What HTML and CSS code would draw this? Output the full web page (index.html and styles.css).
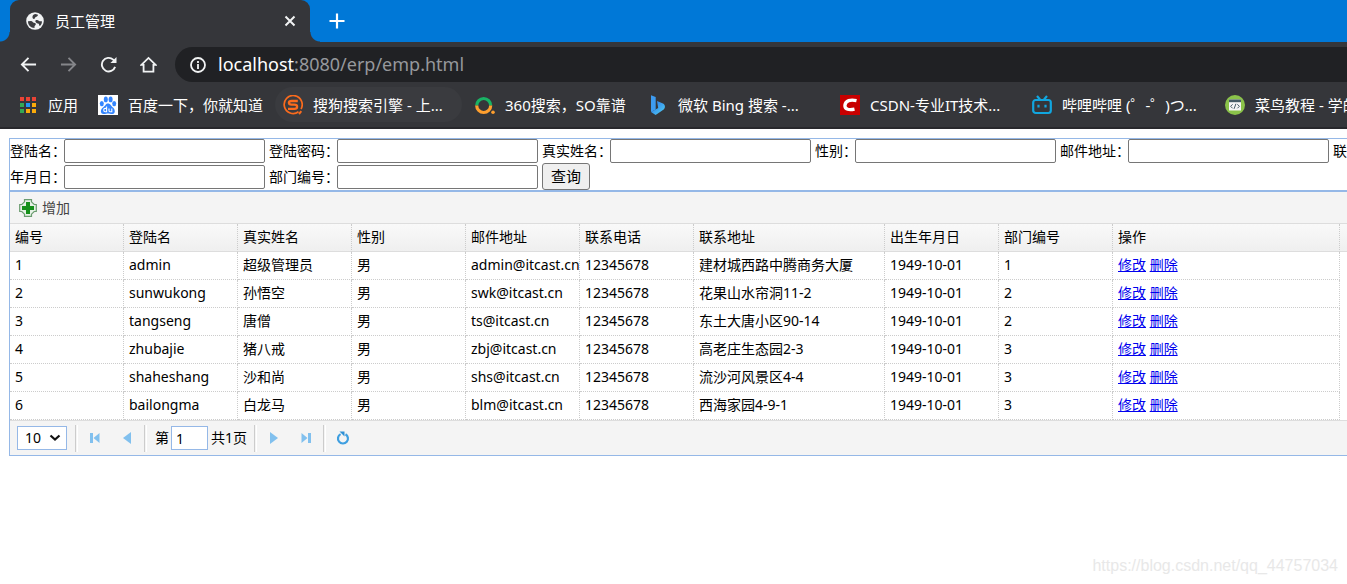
FILE: index.html
```
<!DOCTYPE html>
<html lang="zh-CN">
<head>
<meta charset="utf-8">
<title>员工管理</title>
<link rel="stylesheet" href="styles.css">
</head>
<body>
<header class="browser">
  <div class="tabs">
    <div class="tab">
      <svg class="tab-icon" viewBox="0 0 18 18" aria-hidden="true"><circle cx="9" cy="9" r="8.8" fill="#f1f3f4"/><path d="M2 9.200 5 9c1.500 0 1.600 1.700 3 1.800 1.200.1 2 .4 1.800 1.700-.2 1-1.300 1-1.300 2.100V16C4.600 15.800 2 13 2 9.200ZM6.500 4.500c.2-1.400 1.500-2.300 3-2.500l2.500.7c-.2 1.500-1.200 2-2.300 2.300-.9.300-.4 1.600-1.600 1.900-1 .2-1.900-1-1.600-2.400ZM9.500 8.400c1.400-1 2.700-.3 3.500.5.800.7 2 .3 3 .5-.1 2-.9 3.600-2.200 4.700-.9-.5-.4-2.100-1.600-2.500-1.300-.4-3.500-1.800-2.700-3.200Z" fill="#3b3c40"/></svg>
      <span class="tab-title">员工管理</span>
      <button class="icon-btn close" aria-label="关闭"><svg width="12" height="12" viewBox="0 0 12 12"><path d="m1.500 1.500 9 9m0-9-9 9" stroke="#f1f3f4" stroke-width="2"/></svg></button>
    </div>
    <button class="icon-btn new-tab" aria-label="新标签页"><svg width="16" height="16" viewBox="0 0 16 16"><path d="M8 .5v15M.5 8h15" stroke="#fff" stroke-width="2.200"/></svg></button>
  </div>
  <div class="nav">
    <button class="icon-btn nav-btn" aria-label="后退"><svg width="17" height="17" viewBox="0 0 18 18" fill="none" stroke="#f1f3f4" stroke-width="2"><path d="M17 9H2m7-7L2 9l7 7"/></svg></button>
    <button class="icon-btn nav-btn" aria-label="前进"><svg width="17" height="17" viewBox="0 0 18 18" fill="none" stroke="#85868a" stroke-width="2"><path d="M1 9h15M9 2l7 7-7 7"/></svg></button>
    <button class="icon-btn nav-btn" aria-label="刷新"><svg width="17" height="17" viewBox="0 0 18 18"><path d="M16 11.500A7.200 7.200 0 1 1 14 3.800l1.500 1.700" fill="none" stroke="#f1f3f4" stroke-width="2"/><path d="M17.500 1v6.500H11Z" fill="#f1f3f4"/></svg></button>
    <button class="icon-btn nav-btn" aria-label="主页"><svg width="17" height="17" viewBox="0 0 18 18"><path d="M1.500 9.300 9 2l7.500 7.300h-2.300V16.500H3.800V9.300Z" fill="none" stroke="#f1f3f4" stroke-width="1.900"/></svg></button>
    <div class="address">
      <svg width="16" height="16" viewBox="0 0 16 16" aria-hidden="true"><circle cx="8" cy="8" r="7" fill="none" stroke="#f1f3f4" stroke-width="1.800"/><path d="M8 7v5M8 4v2" stroke="#f1f3f4" stroke-width="1.800"/></svg>
      <span class="url"><span class="host">localhost</span>:8080/erp/emp.html</span>
    </div>
  </div>
  <nav class="bookmarks">
    <a class="bookmark" href="#"><svg class="mark" viewBox="0 0 20 20"><g><path d="M2 2h4v4H2Zm6 0h4v4H8Zm6 0h4v4h-4Z" fill="#ea4335"/><path d="M2 8h4v4H2Zm0 6h4v4H2Z" fill="#34a853"/><path d="M8 8h4v4H8Z" fill="#2196f3"/><path d="M8 14h4v4H8Z" fill="#fbab0a"/><path d="M14 8h4v4h-4Zm0 6h4v4h-4Z" fill="#fbab0a"/></g></svg>应用</a>
    <a class="bookmark" href="#"><svg class="mark" viewBox="0 0 20 20"><path d="M0 0h20v20H0Z" fill="#fff"/><g fill="#3385ff"><ellipse cx="3.800" cy="8.600" rx="2" ry="2.700"/><ellipse cx="7.800" cy="4.400" rx="2" ry="2.900"/><ellipse cx="12.600" cy="4.400" rx="2" ry="2.900"/><ellipse cx="16.200" cy="8.600" rx="2" ry="2.700"/><path d="M10 8.400c2.400 0 3 2.500 5 4s3 6.300-.5 6.500c-2 .1-3-.5-4.500-.5s-2.500.6-4.500.5c-3.500-.2-3.200-4.600-.5-6.500s2.600-4 5-4Z"/></g><path d="M8.600 11.500v5.300H7.200c-2 0-2-3.400 0-3.400h1.400m2.400 0v2.200c0 .8.300 1.200 1 1.200h1.800v-3.400" fill="none" stroke="#fff" stroke-width="1.100"/></svg>百度一下，你就知道</a>
    <a class="bookmark active" href="#"><svg class="mark" viewBox="0 0 20 20" fill="none" stroke="#fb6b1d"><path d="M15.500 16.800A9 9 0 1 1 18 14" stroke-width="1.700"/><path d="M14.800 6H8.600C5 6 5 9.700 8.600 9.700h2.800c3.600 0 3.600 4.100 0 4.100H5" stroke-width="2.300"/><path d="m16 19 2.300-2.800" stroke-width="2"/></svg>搜狗搜索引擎 - 上...</a>
    <a class="bookmark" href="#"><svg class="mark" viewBox="0 0 20 20" fill="none" stroke-width="3.200"><path d="M1.700 10.500a7 7 0 1 1 14 0" stroke="#19b365"/><path d="M1.700 10.500a7 7 0 0 0 14 0" stroke="#ff9f2e"/><circle cx="18" cy="17.300" r="1.800" fill="#ff9f2e" stroke="none"/></svg>360搜索，SO靠谱</a>
    <a class="bookmark" href="#"><svg class="mark" viewBox="0 0 20 20"><defs><linearGradient id="bing" x2="1" y2="1"><stop stop-color="#2870ed"/><stop offset="1" stop-color="#53d3ef"/></linearGradient></defs><path d="m3 .2 4.700 1.800v12.500L3 17Z" fill="#3d9bf0"/><path d="m9 6 6 2.600c2.400 1.100 2.500 4.500.7 6L7.600 20 3 17l7.200-4Z" fill="url(#bing)"/></svg>微软 Bing 搜索 -...</a>
    <a class="bookmark" href="#"><svg class="mark" viewBox="0 0 20 20"><path d="M0 0h20v20H0Z" fill="#c80000"/><path d="M16.500 5.600c-6-1.300-11-.2-11.600 4.600-.4 4.500 4.500 5 9.600 3.900" fill="none" stroke="#fff" stroke-width="3.300"/></svg>CSDN-专业IT技术...</a>
    <a class="bookmark" href="#"><svg class="mark" viewBox="0 0 20 20" fill="none" stroke="#11a6df" stroke-width="2.200"><rect x="1.200" y="5" width="17.600" height="13" rx="2.500"/><path d="m5 1 3 3.500M15 1l-3 3.500M6.500 9.800v2.700m7-2.700v2.700"/></svg>哔哩哔哩 (゜-゜)つ...</a>
    <a class="bookmark" href="#"><svg class="mark" viewBox="0 0 20 20"><circle cx="10" cy="10" r="10" fill="#8bc34a"/><path d="M4 4.500h12v11H4Z" fill="#f5f5f5"/><path d="M4 4.500h12v2.700H4Z" fill="#455a64"/><path d="m7.600 9.300-2 2 2 2m4.800-4 2 2-2 2m-1.500-4.500-1.800 5" fill="none" stroke="#455a64"/></svg>菜鸟教程 - 学的</a>
  </nav>
</header>

<main class="page">
  <form class="search">
    <div class="line">
      <label class="name three" for="username">登陆名：</label><input class="box" id="username" type="text">
      <label class="name four" for="pwd">登陆密码：</label><input class="box" id="pwd" type="text">
      <label class="name four" for="realname">真实姓名：</label><input class="box" id="realname" type="text">
      <label class="name two" for="gender">性别：</label><input class="box" id="gender" type="text">
      <label class="name four" for="email">邮件地址：</label><input class="box" id="email" type="text">
      <span class="name">联系</span>
    </div>
    <div class="line last">
      <label class="name three" for="birthday">年月日：</label><input class="box" id="birthday" type="text">
      <label class="name four" for="dep">部门编号：</label><input class="box" id="dep" type="text">
      <button class="query" type="button">查询</button>
    </div>
  </form>

  <section class="grid">
    <div class="toolbar">
      <button class="add" type="button"><svg width="18" height="18" viewBox="0 0 18 18" aria-hidden="true"><path d="M5.500.7h7v2.100l2.700 2.700h2.100v7h-2.100l-2.700 2.700v2.100h-7v-2.100l-2.700-2.700H.7v-7h2.100l2.700-2.700Z" fill="#e6f1e6" stroke="#6b9c70" stroke-width="1.200"/><path d="M7 3h4v4h4v4h-4v4H7v-4H3V7h4Z" fill="#16901b"/></svg>增加</button>
    </div>
    <table class="data">
      <colgroup><col class="c"><col class="c"><col class="c"><col class="c"><col class="c"><col class="c"><col class="c-addr"><col class="c"><col class="c"><col class="c-op"><col></colgroup>
      <thead><tr><th>编号</th><th>登陆名</th><th>真实姓名</th><th>性别</th><th>邮件地址</th><th>联系电话</th><th>联系地址</th><th>出生年月日</th><th>部门编号</th><th>操作</th><th class="rest"></th></tr></thead>
      <tbody>
        <tr><td>1</td><td>admin</td><td>超级管理员</td><td>男</td><td>admin@itcast.cn</td><td>12345678</td><td>建材城西路中腾商务大厦</td><td>1949-10-01</td><td>1</td><td><a href="#">修改</a> <a href="#">删除</a></td><td class="rest"></td></tr>
        <tr><td>2</td><td>sunwukong</td><td>孙悟空</td><td>男</td><td>swk@itcast.cn</td><td>12345678</td><td>花果山水帘洞11-2</td><td>1949-10-01</td><td>2</td><td><a href="#">修改</a> <a href="#">删除</a></td><td class="rest"></td></tr>
        <tr><td>3</td><td>tangseng</td><td>唐僧</td><td>男</td><td>ts@itcast.cn</td><td>12345678</td><td>东土大唐小区90-14</td><td>1949-10-01</td><td>2</td><td><a href="#">修改</a> <a href="#">删除</a></td><td class="rest"></td></tr>
        <tr><td>4</td><td>zhubajie</td><td>猪八戒</td><td>男</td><td>zbj@itcast.cn</td><td>12345678</td><td>高老庄生态园2-3</td><td>1949-10-01</td><td>3</td><td><a href="#">修改</a> <a href="#">删除</a></td><td class="rest"></td></tr>
        <tr><td>5</td><td>shaheshang</td><td>沙和尚</td><td>男</td><td>shs@itcast.cn</td><td>12345678</td><td>流沙河风景区4-4</td><td>1949-10-01</td><td>3</td><td><a href="#">修改</a> <a href="#">删除</a></td><td class="rest"></td></tr>
        <tr><td>6</td><td>bailongma</td><td>白龙马</td><td>男</td><td>blm@itcast.cn</td><td>12345678</td><td>西海家园4-9-1</td><td>1949-10-01</td><td>3</td><td><a href="#">修改</a> <a href="#">删除</a></td><td class="rest"></td></tr>
      </tbody>
    </table>
    <div class="pager">
      <div class="size"><select class="size-select" aria-label="每页条数"><option>10</option><option>20</option></select><svg class="arrow" width="12" height="8" viewBox="0 0 12 8" aria-hidden="true"><path d="m1.500 1.500 4.500 4 4.500-4" fill="none" stroke="#111" stroke-width="2.200"/></svg></div>
      <span class="sep"></span>
      <button class="icon-btn page-btn" aria-label="首页"><svg width="12" height="12" viewBox="0 0 12 12" fill="#81c0ee"><path d="M1 1h3v10H1ZM10.500 1v10L4.500 6Z"/></svg></button>
      <button class="icon-btn page-btn" aria-label="上一页"><svg width="12" height="12" viewBox="0 0 12 12" fill="#81c0ee"><path d="M10 0v12L2 6Z"/></svg></button>
      <span class="sep"></span>
      <label class="page-no">第<input class="page-input" type="text" value="1"></label>
      <span class="total">共1页</span>
      <span class="sep"></span>
      <button class="icon-btn page-btn" aria-label="下一页"><svg width="12" height="12" viewBox="0 0 12 12" fill="#81c0ee"><path d="M2 0v12l8-6Z"/></svg></button>
      <button class="icon-btn page-btn" aria-label="末页"><svg width="12" height="12" viewBox="0 0 12 12" fill="#81c0ee"><path d="M8 1h3v10H8ZM1.500 1v10l6-5Z"/></svg></button>
      <span class="sep"></span>
      <button class="icon-btn page-btn" aria-label="重新载入"><svg width="14" height="14" viewBox="0 0 14 14"><path d="M9.500 3.200A5 5 0 1 1 4.600 3.100" fill="none" stroke="#3f9fe0" stroke-width="2.200"/><path d="M3.500.5h5v5Z" fill="#2e8fd4"/></svg></button>
    </div>
  </section>
</main>
<div class="watermark">https://blog.csdn.net/qq_44757034</div>
</body>
</html>
```
FILE: styles.css
```
* { box-sizing: border-box; }
html { height: 100%; }
body {
  position: relative;
  min-height: 100%;
  margin: 0;
  overflow: hidden;
  background: #fff;
  color: #000;
  font: 14px/20px "Noto Sans", "Noto Sans CJK SC", sans-serif;
}
button, input, select { font: inherit; color: inherit; }
svg { display: block; flex: none; }
.icon-btn {
  display: flex;
  align-items: center;
  justify-content: center;
  flex: none;
  padding: 0;
  border: 0;
  background: none;
}

/* browser frame */
.browser { background: #35363a; border-bottom: 2px solid #28282c; color: #fff; }
.tabs { display: flex; height: 42px; padding-left: 10px; background: #0078d7; }
.tab {
  position: relative;
  display: flex;
  align-items: center;
  gap: 11px;
  width: 300px;
  padding: 0 14px 0 16px;
  border-radius: 9px 9px 0 0;
  background: #35363a;
  font-size: 15px;
}
.tab::before, .tab::after {
  content: "";
  position: absolute;
  bottom: 0;
  width: 10px;
  height: 10px;
}
.tab::before { right: 100%; background: radial-gradient(circle at 0 0, transparent 9px, #35363a 10px); }
.tab::after { left: 100%; background: radial-gradient(circle at 100% 0, transparent 9px, #35363a 10px); }
.tab-icon { width: 18px; height: 18px; }
.tab-title { flex: 1; }
.new-tab { margin-left: 19px; }
.nav { display: flex; align-items: center; height: 45px; padding-left: 8px; }
.nav-btn { width: 40px; height: 34px; }
.address {
  display: flex;
  flex: 1;
  align-items: center;
  gap: 12px;
  height: 35px;
  margin-left: 7px;
  padding-left: 15px;
  border-radius: 18px 0 0 18px;
  background: #202124;
}
.url { padding-bottom: 2px; color: #96989c; font-size: 18px; line-height: 24px; }
.host { color: #fff; }
.bookmarks {
  display: grid;
  grid-template-columns: 80px 185px 192px 173px 192px 192px 193px auto;
  height: 40px;
  padding-left: 18px;
  overflow: hidden;
}
.bookmark {
  display: flex;
  align-items: center;
  gap: 10px;
  height: 35px;
  color: #fff;
  font-size: 15px;
  text-decoration: none;
  white-space: nowrap;
}
.bookmark.active { margin: 0 13px 0 -8px; padding-left: 8px; border-radius: 18px; background: #3a3b3f; }
.mark { width: 20px; height: 20px; }

/* search form */
.page { padding: 9px 0 0 9px; }
.search {
  overflow: hidden;
  border: 1px solid #95b8e7;
  border-right: 0;
}
.line { display: flex; align-items: center; height: 24px; white-space: nowrap; }
.line.last { height: 27px; }
.name { flex: none; }
.name.two { width: 40px; }
.name.three { width: 54px; }
.name.four { width: 68px; }
.box {
  flex: none;
  width: 201px;
  height: 24px;
  margin-right: 4px;
  padding: 1px 2px;
  border: 1px solid #767676;
  border-radius: 2px;
  background: #fff;
}
.query {
  width: 48px;
  height: 27px;
  padding: 0 0 2px;
  border: 1px solid #767676;
  border-radius: 3px;
  background: #efefef;
  font-size: 15px;
}

/* data grid */
.grid { border: 1px solid #95b8e7; border-right: 0; }
.toolbar { padding: 2px 9px; border-bottom: 1px solid #ddd; background: #f4f4f4; }
.add {
  display: flex;
  align-items: center;
  gap: 5px;
  height: 27px;
  padding: 0;
  border: 0;
  background: none;
  color: #444;
}
.data { width: 100%; table-layout: fixed; border-collapse: separate; border-spacing: 0; }
.c { width: 114px; }
.c-addr { width: 191px; }
.c-op { width: 227px; }
.data th, .data td {
  height: 28px;
  padding: 0 0 2px 5px;
  border-right: 1px dotted #ccc;
  border-bottom: 1px dotted #ccc;
  font-weight: normal;
  text-align: left;
  white-space: nowrap;
}
.data th { border-bottom: 1px solid #ddd; background: linear-gradient(#f9f9f9, #efefef); }
.data .rest { padding: 0; border-right: 0; }
.data td.rest { border-bottom: 0; }
.data a { color: #00e; }
.pager {
  display: flex;
  align-items: center;
  height: 35px;
  padding-left: 7px;
  border-top: 1px solid #ddd;
  background: #f4f4f4;
}
.size { position: relative; margin-right: 8px; }
.size-select {
  display: block;
  width: 50px;
  height: 24px;
  padding: 0 0 0 7px;
  border: 1px solid #95b8e7;
  border-radius: 0;
  background: #fff;
  appearance: none;
}
.arrow { position: absolute; right: 6px; top: 8px; pointer-events: none; }
.sep { width: 3px; height: 27px; border-left: 1px solid #ccc; border-right: 1px solid #fff; }
.page-btn { width: 32px; height: 26px; }
.sep + .page-btn { margin-left: 1px; }
.page-btn + .sep { margin-left: 1px; }
.page-no { display: flex; align-items: center; gap: 2px; margin-left: 8px; }
.page-input { width: 37px; height: 24px; padding: 0 4px; border: 1px solid #95b8e7; }
.total { margin: 0 7px 0 3px; }
.watermark {
  position: absolute;
  right: 9px;
  bottom: 8px;
  color: #e8e8e8;
  font: 16px/20px "Liberation Sans", Arial, sans-serif;
}
```
